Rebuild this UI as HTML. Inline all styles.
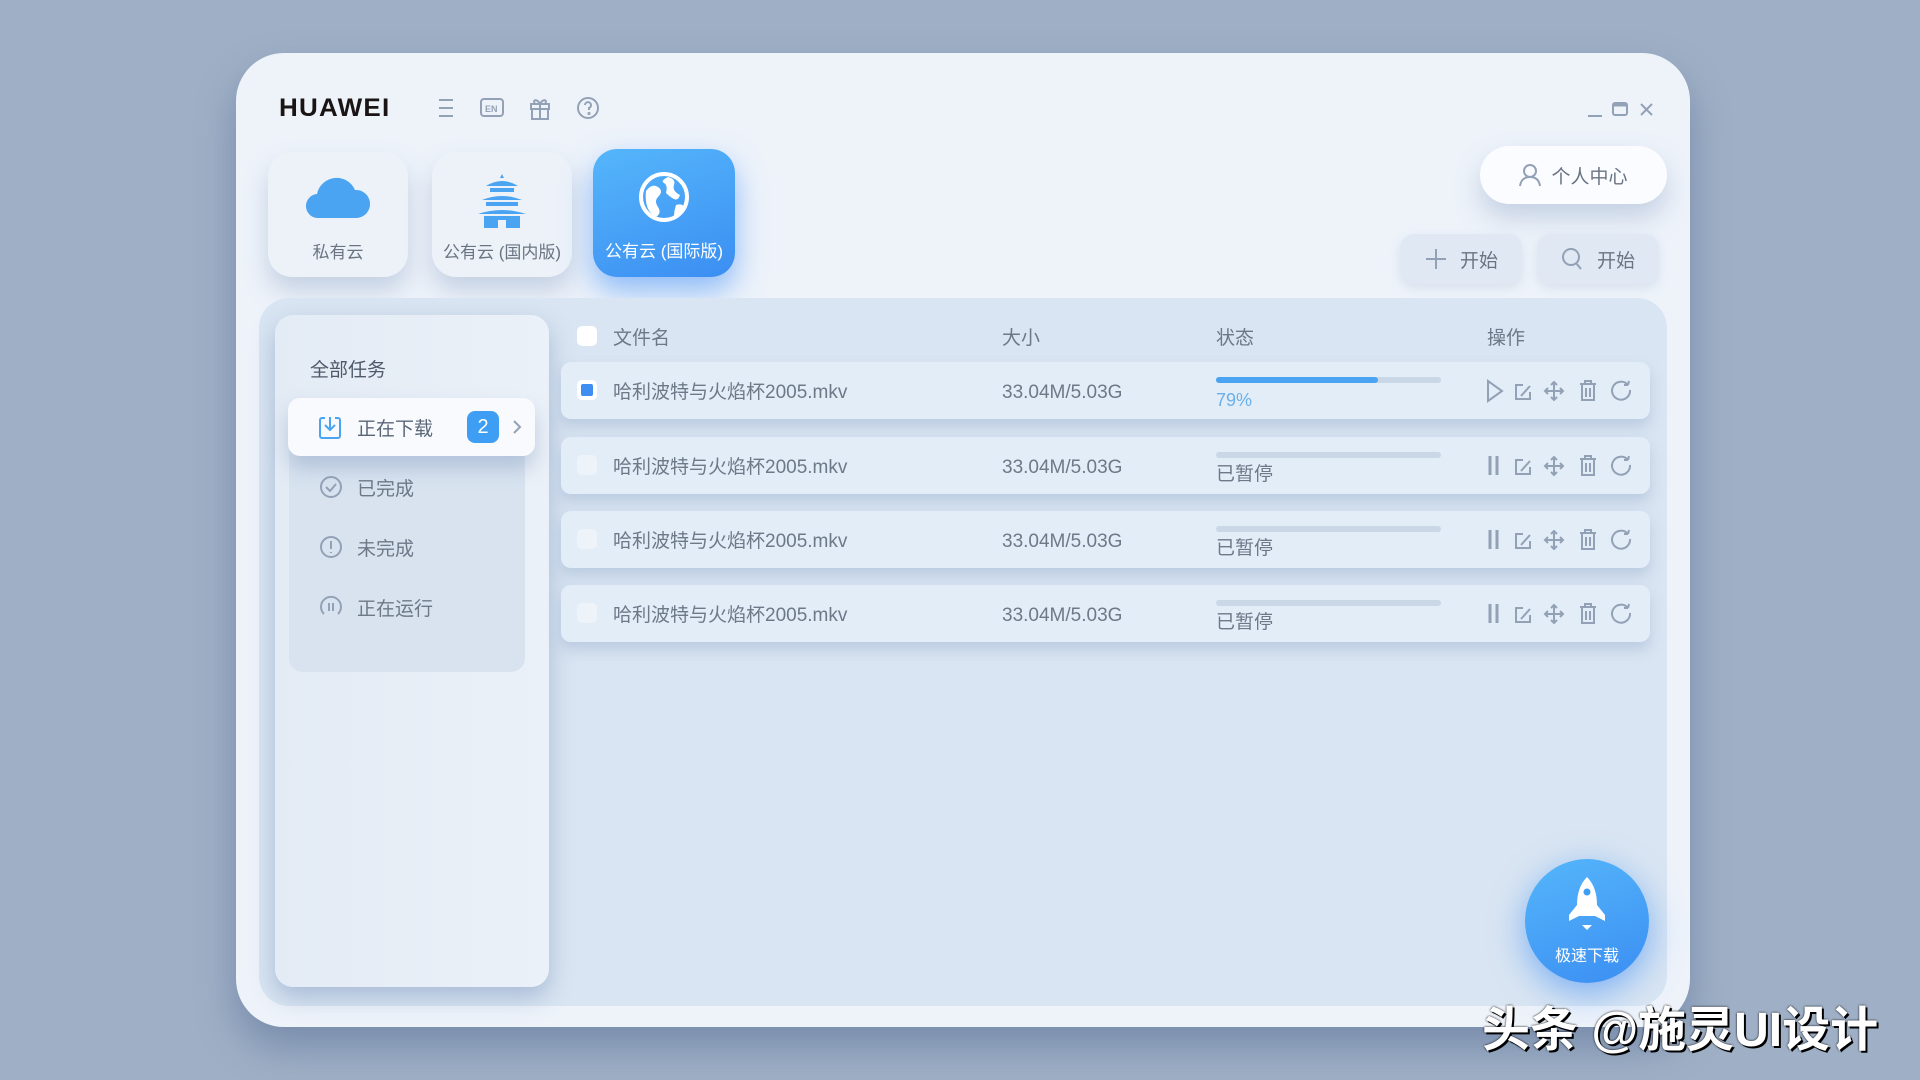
<!DOCTYPE html>
<html><head><meta charset="utf-8"><style>
*{margin:0;padding:0;box-sizing:border-box}
body{width:1920px;height:1080px;background:#9fb0c6;font-family:"Liberation Sans","Noto Sans CJK SC",sans-serif;position:relative;overflow:hidden;color:#5a6678}
.abs{position:absolute}
.win{left:236px;top:53px;width:1454px;height:974px;background:#eef3fa;border-radius:48px;box-shadow:0 20px 40px rgba(70,95,140,.45)}
.logo{left:279px;top:94px;font-weight:bold;font-size:25px;color:#1a1414;letter-spacing:1.2px;transform:scaleX(1.04);transform-origin:left}
.tab{width:140px;height:125px;border-radius:24px;background:#edf2f9;box-shadow:0 14px 24px rgba(120,145,185,.35);text-align:center;font-size:17px;color:#6a7482}
.tab .lbl{position:absolute;left:0;right:0;top:86px}
.tab svg{position:absolute;left:50%;top:20px;transform:translateX(-50%)}
.tab.on{background:linear-gradient(160deg,#55b6fb,#3b8ef2);color:#fff;box-shadow:0 14px 30px rgba(60,140,245,.55)}
.pill{left:1480px;top:146px;width:187px;height:58px;border-radius:29px;background:#fafcff;box-shadow:0 14px 26px rgba(120,145,185,.35);font-size:19px;color:#6a7482;display:flex;align-items:center;justify-content:center;gap:10px}
.btn{top:234px;width:122px;height:50px;border-radius:14px;background:#dfe8f3;box-shadow:0 4px 10px rgba(150,170,200,.25);font-size:19px;color:#6a7482;display:flex;align-items:center;justify-content:center;gap:12px}
.panel{left:259px;top:298px;width:1408px;height:708px;background:#d9e5f2;border-radius:30px}
.side{left:275px;top:315px;width:274px;height:672px;background:linear-gradient(90deg,#e3ebf5,#ebf1f8);border-radius:18px;box-shadow:0 10px 24px rgba(110,135,180,.45)}
.sidein{left:289px;top:440px;width:236px;height:232px;background:#d8e3ef;border-radius:14px}
.act{left:288px;top:398px;width:247px;height:58px;background:#f8fafd;border-radius:12px;box-shadow:0 12px 20px rgba(110,135,180,.35)}
.item{font-size:19px;color:#6d7888}
.hd{top:323px;font-size:19px;color:#6d7888}
.row{left:561px;width:1089px;height:57px;background:#e3edf8;border-radius:10px;box-shadow:0 8px 14px rgba(120,145,185,.3)}
.cb{width:20px;height:20px;border-radius:5px;background:#eef3f9}
.t{font-size:19px;color:#6d7888;line-height:26px}
.bar{left:655px;top:15px;width:225px;height:6px;border-radius:3px;background:#c9d7e7}
.ic{stroke:#93a1b6;fill:none;stroke-width:2}
.rocket{left:1525px;top:859px;width:124px;height:124px;border-radius:50%;background:linear-gradient(160deg,#55b6fb,#3b8ef2);box-shadow:0 10px 34px rgba(60,140,245,.6);color:#fff;font-size:16px;text-align:center}
.wm{left:1482px;top:990px;font-size:48px;font-weight:bold;color:#fff;text-shadow:2px 2px 0 #000,0 0 2px #000;white-space:nowrap}
</style></head><body>
<div class="abs win"></div>
<div class="abs logo">HUAWEI</div>
<svg class="abs" style="left:436px;top:96px" width="170" height="26" viewBox="0 0 170 26">
<g class="ic" stroke-width="2.2"><path d="M3 4h14M3 12h14M3 20h14"/>
<rect x="45" y="3" width="22" height="17" rx="3"/><text x="49" y="16" font-size="9" fill="#93a1b6" stroke="none" font-family="Liberation Sans" font-weight="bold">EN</text>
<rect x="95" y="8" width="18" height="5"/><rect x="96" y="13" width="16" height="10"/><path d="M104 8v15M104 8c-3-6-8-4-5 0M104 8c3-6 8-4 5 0"/>
<circle cx="152" cy="12" r="10"/><path d="M149 9a3 3 0 1 1 4 3v2"/><circle cx="153" cy="17.5" r=".6"/></g></svg>
<svg class="abs" style="left:1584px;top:100px" width="76" height="20"><g class="ic"><path d="M4 16h14"/><rect x="29" y="3" width="14" height="12" rx="2"/><path d="M29 5h14" stroke-width="3"/><path d="M57 4l11 11M68 4l-11 11"/></g></svg>

<div class="abs tab" style="left:268px;top:152px"><svg width="66" height="50" viewBox="0 0 66 50"><path d="M14 46a12 12 0 0 1-2-24 20 20 0 0 1 38-4 14 14 0 0 1 2 28z" fill="#4aa4f1"/></svg><div class="lbl">私有云</div></div>
<div class="abs tab" style="left:432px;top:152px"><svg width="52" height="56" viewBox="0 0 52 56"><g fill="#4aa4f1"><path d="M26 2l2 4h-4z"/><path d="M10 14q16-10 32 0z"/><rect x="14" y="16" width="24" height="4"/><path d="M6 28q20-8 40 0z"/><rect x="10" y="30" width="32" height="4"/><path d="M2 42q24-8 48 0z"/><path d="M8 44h36v12H30v-8h-8v8H8z"/></g></svg><div class="lbl">公有云 (国内版)</div></div>
<div class="abs tab on" style="left:593px;top:149px;height:128px;width:142px"><svg width="56" height="56" viewBox="0 0 56 56"><circle cx="28" cy="28" r="23" fill="none" stroke="#fff" stroke-width="4"/><path d="M10 22q6-8 12-4t0 10q-4 4 0 10t-2 10q-12-6-10-26zM32 8q8 2 6 8t6 10q-2 6-6 4t-8-6q2-8-2-10t4-6zM40 36q6-2 8 2-4 8-10 10 0-6 2-12z" fill="#fff"/></svg><div class="lbl" style="top:88px">公有云 (国际版)</div></div>

<div class="abs pill"><svg width="22" height="24" viewBox="0 0 22 24"><g class="ic" stroke-width="2.2"><circle cx="11" cy="8" r="6"/><path d="M1 23c1-7 5-9 10-9s9 2 10 9"/></g></svg>个人中心</div>
<div class="abs btn" style="left:1400px"><svg width="24" height="24"><path d="M12 2v20M2 12h20" class="ic"/></svg>开始</div>
<div class="abs btn" style="left:1537px"><svg width="24" height="24"><g class="ic" stroke-width="2.5"><circle cx="10" cy="10" r="8"/><path d="M15 16l5 6"/></g></svg>开始</div>

<div class="abs panel"></div>
<div class="abs side"></div>
<div class="abs sidein"></div>
<div class="abs act"></div>
<div class="abs item" style="left:310px;top:355px;color:#4e5a6a">全部任务</div>
<svg class="abs" style="left:318px;top:414px" width="24" height="26"><g fill="none" stroke="#4aa4f1" stroke-width="2"><path d="M7 4H4a2 2 0 0 0-2 2v16a2 2 0 0 0 2 2h16a2 2 0 0 0 2-2V6a2 2 0 0 0-2-2h-3"/><path d="M12 3v13M7 11l5 5 5-5"/></g></svg>
<div class="abs item" style="left:357px;top:414px;color:#5a6678">正在下载</div>
<div class="abs" style="left:467px;top:411px;width:32px;height:32px;border-radius:8px;background:#3d9ef3;color:#fff;font-size:20px;text-align:center;line-height:32px">2</div>
<svg class="abs" style="left:511px;top:419px" width="12" height="16"><path d="M3 2l6 6-6 6" class="ic" stroke="#6d7888"/></svg>
<svg class="abs" style="left:319px;top:475px" width="24" height="24"><g class="ic" stroke="#a8b3c3"><circle cx="12" cy="12" r="10"/><path d="M7 12l4 4 6-7"/></g></svg>
<div class="abs item" style="left:357px;top:474px">已完成</div>
<svg class="abs" style="left:319px;top:535px" width="24" height="24"><g class="ic" stroke="#a8b3c3"><circle cx="12" cy="12" r="10"/><path d="M12 6v8M12 17v1"/></g></svg>
<div class="abs item" style="left:357px;top:534px">未完成</div>
<svg class="abs" style="left:319px;top:595px" width="24" height="24"><g class="ic" stroke="#a8b3c3"><path d="M5 19A10 10 0 1 1 19 19"/><path d="M10 8v8M14 8v8"/></g></svg>
<div class="abs item" style="left:357px;top:594px">正在运行</div>

<div class="abs cb" style="left:577px;top:326px;background:#fff"></div>
<div class="abs hd" style="left:613px">文件名</div>
<div class="abs hd" style="left:1002px">大小</div>
<div class="abs hd" style="left:1216px">状态</div>
<div class="abs hd" style="left:1487px">操作</div>

<div class="abs row" style="top:362px">
 <div class="abs cb" style="left:16px;top:18px;background:#fff"><div style="margin:4px;width:12px;height:12px;border-radius:2px;background:#3d8ef0"></div></div>
 <div class="abs t" style="left:52px;top:18px">哈利波特与火焰杯2005.mkv</div>
 <div class="abs t" style="left:441px;top:18px">33.04M/5.03G</div>
 <div class="abs bar"><div style="width:72%;height:6px;border-radius:3px;background:#4aa4f1"></div></div>
 <div class="abs t" style="left:655px;top:25px;color:#6ab0ea;font-size:18px">79%</div>
 <svg class="abs" style="left:925px;top:16px" width="150" height="26"><g class="ic"><path d="M2 3l14 10-14 10z"/><path d="M37 7h-7v14h14v-7M35 18l9-10"/><path d="M68 4v18M59 13h18M65 7l3-3 3 3M65 19l3 3 3-3M62 10l-3 3 3 3M74 10l3 3-3 3"/><path d="M94 6h16M99 6V3h6v3M96 6v16h12V6M100 10v9M104 10v9"/><path d="M142 7a9 9 0 1 0 2 5M142 7l1-4M142 7l-4 0"/></g></svg>
</div>
<div class="abs row" style="top:437px"><div class="abs cb" style="left:16px;top:18px"></div><div class="abs t" style="left:52px;top:18px">哈利波特与火焰杯2005.mkv</div><div class="abs t" style="left:441px;top:18px">33.04M/5.03G</div><div class="abs bar"></div><div class="abs t" style="left:655px;top:25px">已暂停</div>
 <svg class="abs" style="left:925px;top:16px" width="150" height="26"><g class="ic"><path d="M4 3v19M11 3v19" stroke-width="3"/><path d="M37 7h-7v14h14v-7M35 18l9-10"/><path d="M68 4v18M59 13h18M65 7l3-3 3 3M65 19l3 3 3-3M62 10l-3 3 3 3M74 10l3 3-3 3"/><path d="M94 6h16M99 6V3h6v3M96 6v16h12V6M100 10v9M104 10v9"/><path d="M142 7a9 9 0 1 0 2 5M142 7l1-4M142 7l-4 0"/></g></svg></div>
<div class="abs row" style="top:511px"><div class="abs cb" style="left:16px;top:18px"></div><div class="abs t" style="left:52px;top:18px">哈利波特与火焰杯2005.mkv</div><div class="abs t" style="left:441px;top:18px">33.04M/5.03G</div><div class="abs bar"></div><div class="abs t" style="left:655px;top:25px">已暂停</div>
 <svg class="abs" style="left:925px;top:16px" width="150" height="26"><g class="ic"><path d="M4 3v19M11 3v19" stroke-width="3"/><path d="M37 7h-7v14h14v-7M35 18l9-10"/><path d="M68 4v18M59 13h18M65 7l3-3 3 3M65 19l3 3 3-3M62 10l-3 3 3 3M74 10l3 3-3 3"/><path d="M94 6h16M99 6V3h6v3M96 6v16h12V6M100 10v9M104 10v9"/><path d="M142 7a9 9 0 1 0 2 5M142 7l1-4M142 7l-4 0"/></g></svg></div>
<div class="abs row" style="top:585px"><div class="abs cb" style="left:16px;top:18px"></div><div class="abs t" style="left:52px;top:18px">哈利波特与火焰杯2005.mkv</div><div class="abs t" style="left:441px;top:18px">33.04M/5.03G</div><div class="abs bar"></div><div class="abs t" style="left:655px;top:25px">已暂停</div>
 <svg class="abs" style="left:925px;top:16px" width="150" height="26"><g class="ic"><path d="M4 3v19M11 3v19" stroke-width="3"/><path d="M37 7h-7v14h14v-7M35 18l9-10"/><path d="M68 4v18M59 13h18M65 7l3-3 3 3M65 19l3 3 3-3M62 10l-3 3 3 3M74 10l3 3-3 3"/><path d="M94 6h16M99 6V3h6v3M96 6v16h12V6M100 10v9M104 10v9"/><path d="M142 7a9 9 0 1 0 2 5M142 7l1-4M142 7l-4 0"/></g></svg></div>

<div class="abs rocket"><svg style="position:absolute;left:40px;top:16px" width="44" height="60" viewBox="0 0 44 60"><path d="M22 2q10 10 10 28l8 10v6l-10-5H14L4 46v-6l8-10Q12 12 22 2z" fill="#fff"/><circle cx="22" cy="17" r="3.5" fill="#3d9ef3"/><path d="M17 50h10l-5 5z" fill="#fff"/></svg><div style="position:absolute;left:0;right:0;top:83px">极速下载</div></div>
<div class="abs wm">头条 @施灵UI设计</div>
</body></html>
